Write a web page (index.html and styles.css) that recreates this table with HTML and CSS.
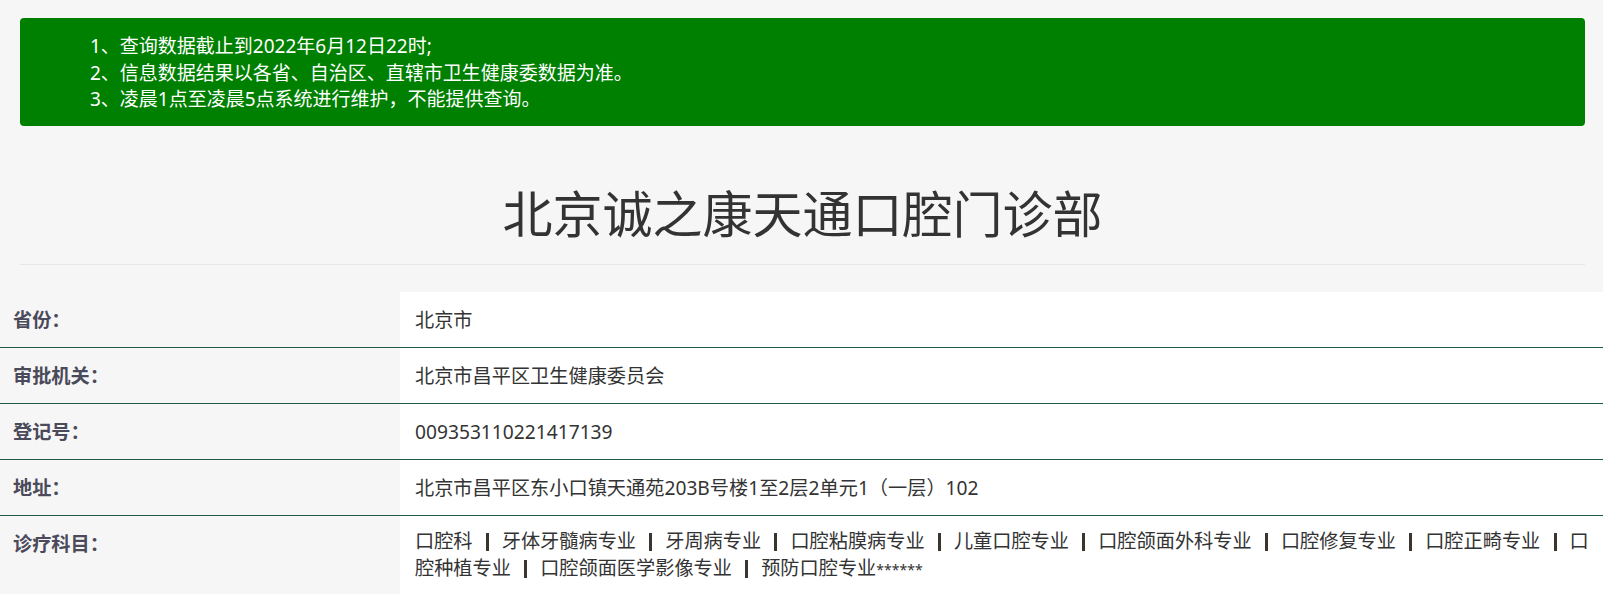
FILE: index.html
```html
<!DOCTYPE html>
<html lang="zh-CN">
<head>
<meta charset="utf-8">
<title>北京诚之康天通口腔门诊部</title>
<link rel="stylesheet" href="styles.css">
</head>
<body>
<div class="notice">
  <div class="notice-line">1、查询数据截止到2022年6月12日22时;</div>
  <div class="notice-line">2、信息数据结果以各省、自治区、直辖市卫生健康委数据为准。</div>
  <div class="notice-line">3、凌晨1点至凌晨5点系统进行维护，不能提供查询。</div>
</div>
<div class="header">
  <h1 class="title">北京诚之康天通口腔门诊部</h1>
</div>
<div class="info">
  <div class="row">
    <div class="label">省份：</div>
    <div class="value">北京市</div>
  </div>
  <div class="row">
    <div class="label">审批机关：</div>
    <div class="value">北京市昌平区卫生健康委员会</div>
  </div>
  <div class="row">
    <div class="label">登记号：</div>
    <div class="value">009353110221417139</div>
  </div>
  <div class="row">
    <div class="label">地址：</div>
    <div class="value">北京市昌平区东小口镇天通苑203B号楼1至2层2单元1（一层）102</div>
  </div>
  <div class="row last">
    <div class="label">诊疗科目：</div>
    <div class="value">口腔科<span class="sep"></span>牙体牙髓病专业<span class="sep"></span>牙周病专业<span class="sep"></span>口腔粘膜病专业<span class="sep"></span>儿童口腔专业<span class="sep"></span>口腔颌面外科专业<span class="sep"></span>口腔修复专业<span class="sep"></span>口腔正畸专业<span class="sep"></span>口腔种植专业<span class="sep"></span>口腔颌面医学影像专业<span class="sep"></span>预防口腔专业<span class="stars">******</span></div>
  </div>
</div>
</body>
</html>
```
FILE: styles.css
```css
html, body {
  margin: 0;
  padding: 0;
}
body {
  background: #f6f6f6;
  font-family: "Noto Sans", "Noto Sans CJK SC", sans-serif;
  color: #333;
}
.notice {
  margin: 18px 18px 0 20px;
  height: 108px;
  box-sizing: border-box;
  padding: 15px 0 0 70px;
  background: #008000;
  border-radius: 4px;
  color: #fff;
  font-size: 19px;
  line-height: 26.5px;
}
.header {
  margin: 0 18px 0 20px;
  padding: 53px 0 15px;
  border-bottom: 1px solid #e6e6e6;
}
.title {
  margin: 0;
  text-align: center;
  font-size: 50px;
  line-height: 70px;
  font-weight: 400;
  color: #333;
}
.info {
  margin-top: 27px;
}
.row {
  display: grid;
  grid-template-columns: 400px 1fr;
  border-bottom: 1px solid #1f5a46;
}
.row.last {
  border-bottom: none;
}
.label {
  padding: 14px 0 14px 13px;
  font-size: 19.2px;
  line-height: 27px;
  font-weight: 700;
  color: #4a4a5a;
}
.value {
  background: #fff;
  padding: 14px 8px 14px 15px;
  font-size: 19.2px;
  line-height: 27px;
  color: #333;
}
.row.last .value {
  padding-top: 11px;
}
.sep {
  display: inline-block;
  width: 3px;
  height: 18px;
  margin: 0 13px 0 13.2px;
  background: #3a3530;
  vertical-align: -3px;
}
.stars {
  font-size: 14px;
}
```
